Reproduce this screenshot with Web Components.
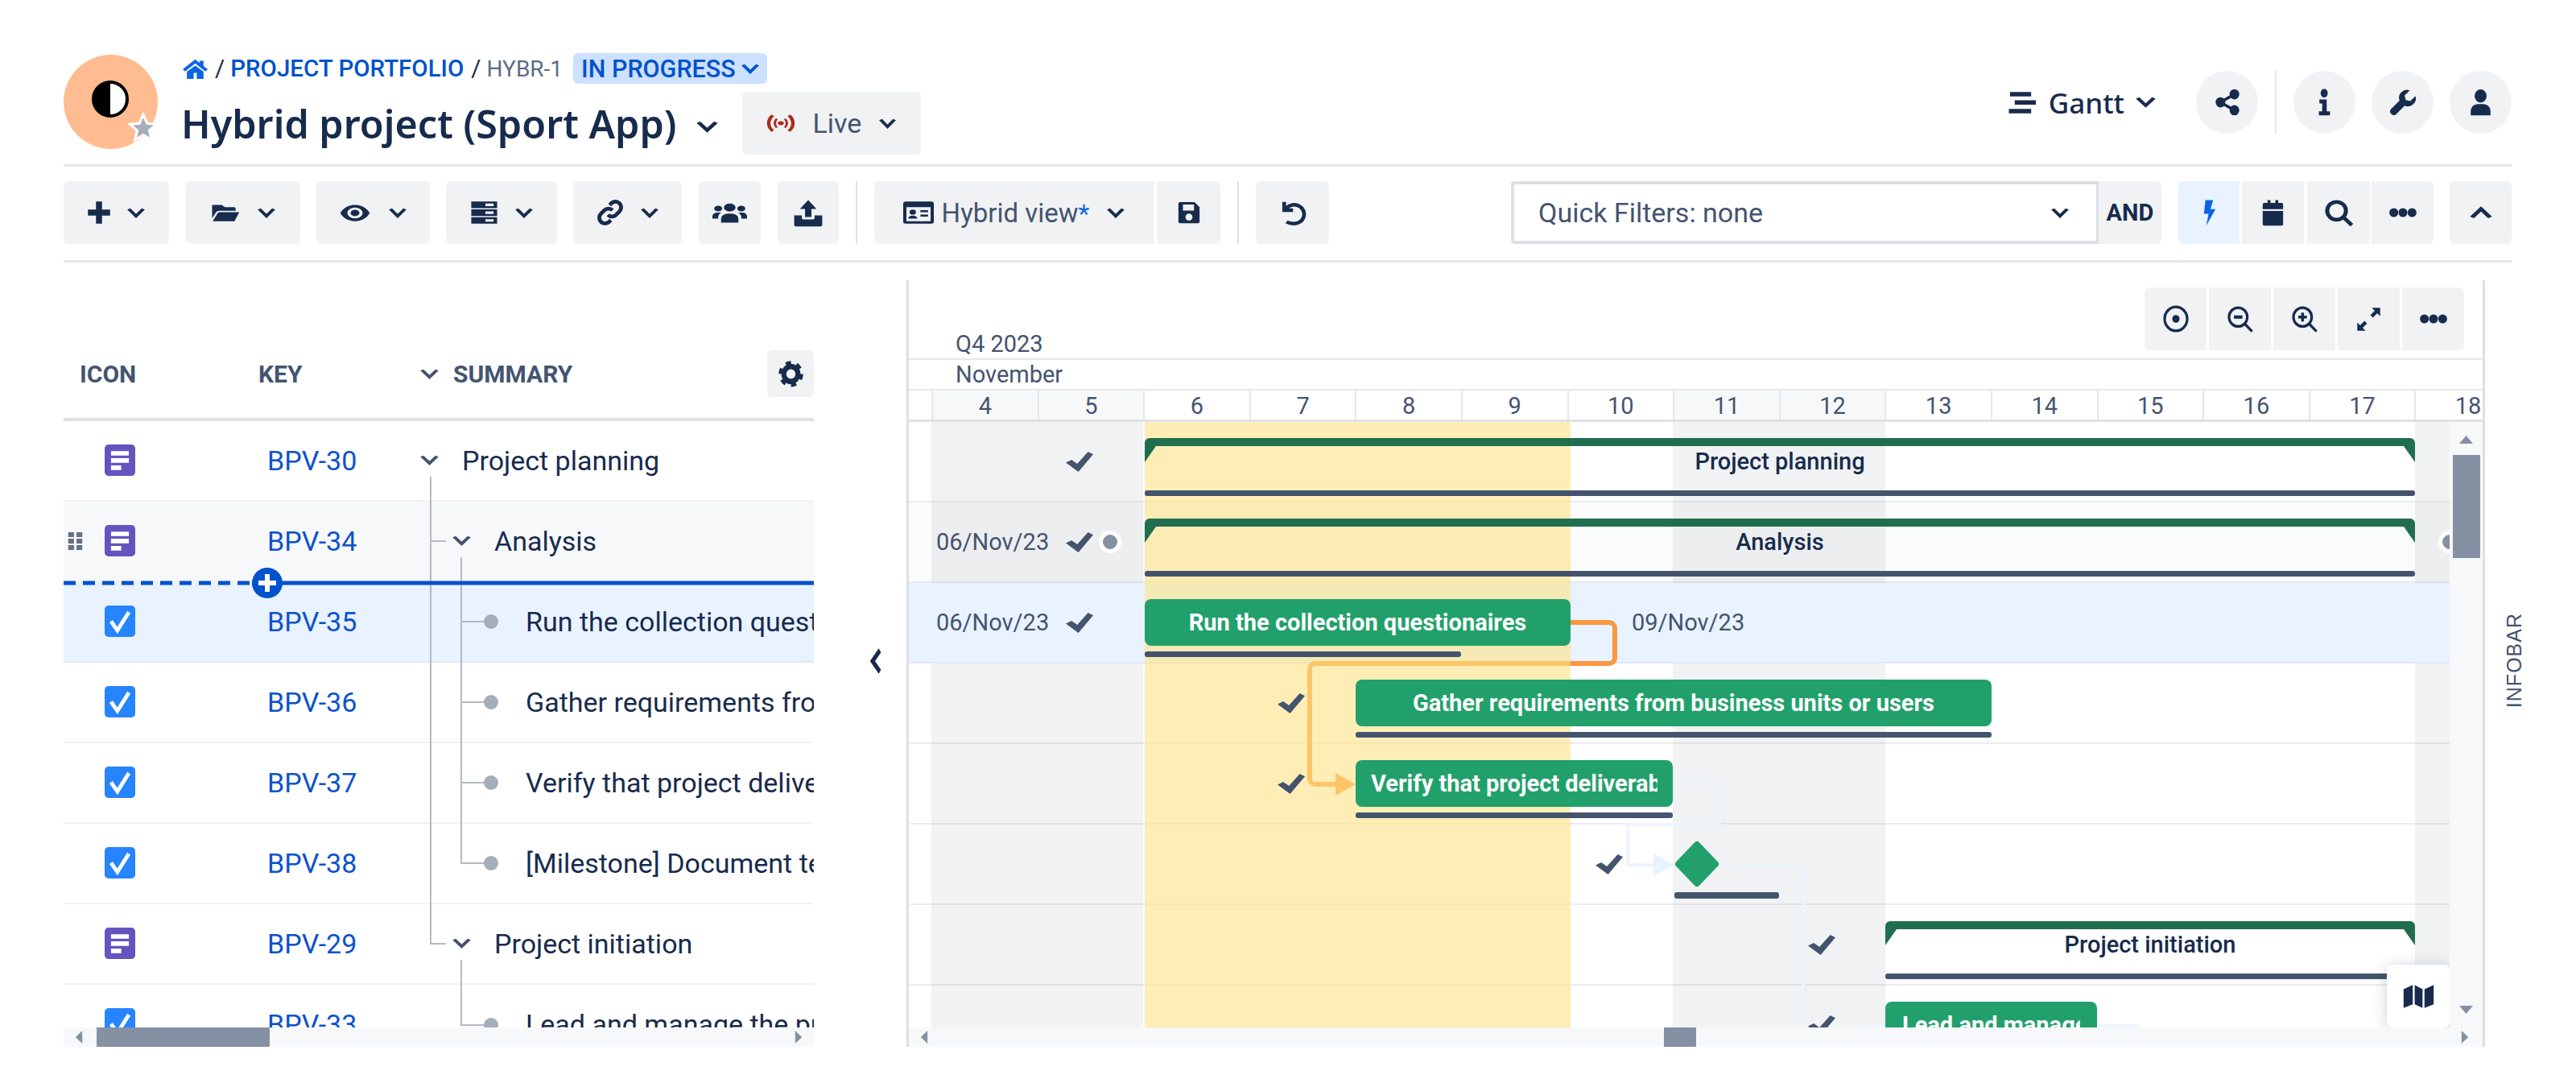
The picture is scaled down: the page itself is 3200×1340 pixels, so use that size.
<!DOCTYPE html>
<html lang="en">
<head>
<meta charset="utf-8">
<title>Hybrid project (Sport App)</title>
<style>
  html, body { margin: 0; padding: 0; background: #fff; }
  body { width: 3200px; height: 1340px; overflow: hidden; font-family: Roboto, "Liberation Sans", sans-serif; color: #172b4d; }
</style>
</head>
<body>
<project-page></project-page>

<script>
const ICONS = {
  chev: '<path d="M3 4l9 14L21 4" fill="none" stroke="currentColor" stroke-width="4.600"/>',
  chevup: '<path d="M3 20L12 6l9 14" fill="none" stroke="currentColor" stroke-width="4.600"/>',
  chevleft: '<path d="M18 2L7 12l11 10" fill="none" stroke="currentColor" stroke-width="5"/>',
  home: '<path d="M12 1.500L0 12.500l2.200 2.300L12 6l9.800 8.800 2.200-2.300-4-3.600V3h-3.800v2.500zM12 8.500L4 15.200v8h6.500V16.500h3v6.700H20v-8z"/>',
  plus: '<path d="M9 1h6v8h8v6h-8v8H9v-8H1V9h8z"/>',
  folder: '<path d="M1 3h8l2.500 2.500H19a1.500 1.500 0 011.500 1.500v2.500H7a3 3 0 00-2.700 1.700L1 18zM7 11h16.500L19.500 21H1.500l4.200-9a1.500 1.500 0 011.300-1z"/>',
  eye: '<path fill-rule="evenodd" d="M12 3C6.500 3 2.300 7 .5 12c1.800 5 6 9 11.500 9s9.700-4 11.500-9C21.700 7 17.500 3 12 3zM12 6a6 6 0 110 12 6 6 0 010-12zM12 8.500a3.500 3.500 0 100 7 3.500 3.500 0 000-7z"/>',
  server: '<path fill-rule="evenodd" d="M1 1h22v6.500H1zM13 3v2.500h7V3zM1 8.800h22v6.500H1zM13 10.800v2.500h7v-2.500zM1 16.500h22V23H1zM13 18.500V21h7v-2.500z"/>',
  link: '<g fill="none" stroke="currentColor" stroke-width="3.400"><path d="M10 14a5 5 0 007.100 0l3-3a5 5 0 00-7.100-7.100l-1.500 1.500"/><path d="M14 10a5 5 0 00-7.100 0l-3 3a5 5 0 007.100 7.100l1.500-1.500"/></g>',
  users: '<circle cx="12" cy="7" r="4"/><circle cx="4" cy="8" r="2.800"/><circle cx="20" cy="8" r="2.800"/><path d="M6 22v-4a5 5 0 015-5h2a5 5 0 015 5v4zM0 18v-2.500A3.500 3.500 0 013.500 12H6a7 7 0 00-2 6zM24 18v-2.500a3.500 3.500 0 00-3.500-3.500H18a7 7 0 012 6z"/>',
  upload: '<path d="M12 1l6.500 7.500H14.500v7h-5v-7H5.500zM1 14h6v2.500a1 1 0 001 1h8a1 1 0 001-1V14h6v8a1.500 1.500 0 01-1.500 1.500h-19A1.500 1.500 0 011 22z"/>',
  idcard: '<path fill-rule="evenodd" d="M2 1h20a2 2 0 012 2v18a2 2 0 01-2 2H2a2 2 0 01-2-2V3a2 2 0 012-2zM2.500 6.500V20.500h19V6.500zM4 18c0-2 1.500-3 3.500-3s3.500 1 3.500 3zM7.500 9a2.500 2.500 0 110 5 2.500 2.500 0 010-5zM13.500 9.500h6v2h-6zM13.500 14h6v2h-6z"/>',
  save: '<path fill-rule="evenodd" d="M3 1.500h14.500l5 5V21a1.500 1.500 0 01-1.500 1.500H3A1.500 1.500 0 011.500 21V3A1.500 1.500 0 013 1.500zM6 4v6h11V4zM12 13a3.500 3.500 0 100 7 3.500 3.500 0 000-7z"/>',
  undo: '<g fill="none" stroke="currentColor" stroke-width="3.200"><path d="M6 9A8.500 8.500 0 1112 21.500c-2 0-3.500-.5-5-1.500"/><path d="M5 2v7.500h7.500"/></g>',
  bolt: '<path d="M7 1h10l-3.500 8H20L8 23.500 11 13H5z"/>',
  calendar: '<path d="M6.500 1h3v3h-3zM14.500 1h3v3h-3zM3 3.500h18a1.500 1.500 0 011.500 1.500v4h-21V5A1.500 1.500 0 013 3.500zM1.500 10.500h21V22a1.500 1.500 0 01-1.500 1.500H3A1.500 1.500 0 011.500 22z"/>',
  search: '<g fill="none" stroke="currentColor" stroke-width="3.400"><circle cx="10" cy="10" r="8"/><path d="M15.500 15.500L23 23"/></g>',
  dots: '<ellipse cx="4" cy="12" rx="3.900" ry="11"/><ellipse cx="12" cy="12" rx="3.900" ry="11"/><ellipse cx="20" cy="12" rx="3.900" ry="11"/>',
  share: '<circle cx="18.500" cy="5" r="4.500"/><circle cx="18.500" cy="19" r="4.500"/><circle cx="5.500" cy="12" r="4.500"/><path d="M18.500 5L5.500 12l13 7" fill="none" stroke="currentColor" stroke-width="2.600"/>',
  info: '<ellipse cx="11.500" cy="4" rx="7" ry="3.800"/><path d="M2 9.500h14.500V20H23v3.500H1V20h6.500v-7H2z"/>',
  wrench: '<path d="M23 6.500l-4.500 4.500-4-1-1-4L18 1.500a7 7 0 00-9 9L1.500 18a3.200 3.200 0 004.500 4.500l7.500-7.500a7 7 0 009.500-8.500z"/>',
  user: '<circle cx="12" cy="6.500" r="5.800"/><path d="M2.500 23.500v-3.500A6.500 6.500 0 019 13.500h6a6.500 6.500 0 016.500 6.500v3.500z"/>',
  gear: '<circle cx="12" cy="12" r="6.800" fill="none" stroke="currentColor" stroke-width="4.800"/><circle cx="12" cy="12" r="10" fill="none" stroke="currentColor" stroke-width="3.600" stroke-dasharray="5 5.470"/>',
  target: '<circle cx="12" cy="12" r="10.500" fill="none" stroke="currentColor" stroke-width="2.400"/><circle cx="12" cy="12" r="3.400"/>',
  zoomout: '<g fill="none" stroke="currentColor" stroke-width="2.400"><circle cx="10" cy="10" r="8.500"/><path d="M16 16l7 7"/><path d="M6 10h8" stroke-width="3"/></g>',
  zoomin: '<g fill="none" stroke="currentColor" stroke-width="2.400"><circle cx="10" cy="10" r="8.500"/><path d="M16 16l7 7"/><path d="M6 10h8M10 6v8" stroke-width="2.600"/></g>',
  expand: '<path d="M15 1h8v8l-2.800-2.800-4.200 4.200-2.400-2.400 4.200-4.200zM9 23H1v-8l2.800 2.800 4.200-4.200 2.400 2.400-4.200 4.200z"/>',
  map: '<path d="M.5 5L7.500 1v18.500l-7 3.500zM9 1l6 4v18l-6-3.500zM16.500 5l7-4v18.500l-7 3.500z"/>',
  gantt: '<path d="M2 1h18v4.500H2zM6 9.500h18v4.500H6zM1 18.500h19V23H1z"/>',
  signal: '<g fill="none" stroke="currentColor" stroke-width="2.600"><path d="M6 3C2 8 2 16 6 21M18 3c4 5 4 13 0 18"/><path d="M9 7c-2 3-2 7 0 10M15 7c2 3 2 7 0 10" stroke-width="1.800"/></g><circle cx="12" cy="12" r="2.200"/>',
  grip: '<path d="M1 1h9v6H1zM14 1h9v6h-9zM1 9h9v6H1zM14 9h9v6h-9zM1 17h9v6H1zM14 17h9v6h-9z"/>',
  story: '<rect width="24" height="24" rx="3" fill="#6554c0"/><path d="M5 5h14v3.500H5zM5 10.500h14V14H5zM5 16h8v3.500H5z" fill="#fff"/>',
  task: '<rect width="24" height="24" rx="3" fill="#2684ff"/><path d="M5 12l5 7 9-14" fill="none" stroke="#fff" stroke-width="3"/>',
  check: '<path d="M0 13L5 9.500 10 14.500 19.500 0 24 3 11 24z"/>',
  tri: '<path d="M12 2l12 20H0z"/>',
  tridown: '<path d="M12 22L0 2h24z"/>',
  trileft: '<path d="M2 12L22 0v24z"/>',
  triright: '<path d="M22 12L2 0v24z"/>',
};

class UiIcon extends HTMLElement {
  connectedCallback() {
    const name = this.getAttribute('name');
    const w = this.getAttribute('w') || 24;
    const h = this.getAttribute('h') || w;
    const color = this.getAttribute('color') || 'inherit';
    this.attachShadow({ mode: 'open' });
    this.shadowRoot.innerHTML = `
      <style>
        :host { display: inline-flex; flex: none; width: ${w}px; height: ${h}px; color: ${color}; }
        svg { width: 100%; height: 100%; display: block; fill: currentColor; overflow: visible; }
      </style>
      <svg viewBox="0 0 24 24" preserveAspectRatio="none">${ICONS[name] || ''}</svg>`;
  }
}
customElements.define('ui-icon', UiIcon);

// grey toolbar button, width comes from the host style
class ToolBtn extends HTMLElement {
  constructor() {
    super();
    this.attachShadow({ mode: 'open' });
    this.shadowRoot.innerHTML = `
      <style>
        :host { display: inline-flex; flex: none; align-items: center; justify-content: center; gap: 20px;
                height: 78px; background: #f1f2f4; border-radius: 6px; color: #172b4d; font-size: 33px; box-sizing: border-box; }
        :host([round]) { border-radius: 50%; width: 77px; }
        :host([on]) { background: #e9f2ff; }
      </style>
      <slot></slot>`;
  }
}
customElements.define('tool-btn', ToolBtn);

class PageHeader extends HTMLElement {
  constructor() {
    super();
    this.attachShadow({ mode: 'open' });
    this.shadowRoot.innerHTML = `
      <style>
        :host { display: flex; height: 138px; border-bottom: 3px solid #e6e7ea; box-sizing: content-box; }
        .avatar { position: relative; width: 117px; height: 117px; margin-top: 2px; border-radius: 50%; background: #ffbc91; display: flex; align-items: center; justify-content: center; flex: none; }
        .moon { width: 38px; height: 38px; border: 4px solid #000; border-radius: 50%; background: linear-gradient(90deg, #000 50%, #fff 50%); margin: -7px 0 0 -1px; }
        .star { position: absolute; left: 80px; top: 70px; width: 38px; height: 40px; }
        .titles { margin-left: 31px; display: flex; flex-direction: column; }
        .crumbs { display: flex; align-items: center; height: 38px; font-size: 29.500px; font-weight: 500; color: #0052cc; white-space: nowrap; }
        .sep { color: #172b4d; font-weight: 400; margin: 0 7px 0 9px; }
        .issue { color: #5e6c84; font-weight: 400; font-size: 28px; }
        .pill { display: flex; align-items: center; height: 38px; margin-left: 13px; padding: 0 9px 0 10px; background: #cce0ff; border-radius: 6px; gap: 6px; color: #0052cc; font-size: 30.500px; }
        .name { display: flex; align-items: center; height: 78px; margin-top: 10px; }
        h1 { margin: 0 0 0 -2px; font: 600 48.500px "Noto Sans", Roboto, sans-serif; color: #172b4d; white-space: nowrap; }
        h1 + ui-icon { margin: 8px 29px 0 23px; }
        .live { gap: 0; width: 222px; justify-content: flex-start; padding-left: 28px; color: #44546f; font-size: 34px; }
        .right { margin-left: auto; display: flex; align-items: center; margin-top: 22px; height: 78px; }
        .gantt { display: flex; align-items: center; font: 500 35px "Noto Sans", Roboto, sans-serif; color: #172b4d; margin-right: 49px; }
        .rule { width: 2px; height: 78px; background: #e6e7ea; margin: 0 21px; }
      </style>
      <div class="avatar">
        <div class="moon"></div>
        <svg class="star" viewBox="0 0 24 24"><path d="M12 2l3 7 7.500.6-5.700 5 1.700 7.400L12 18l-6.500 4 1.700-7.400-5.700-5L9 9z" fill="#a5adba" stroke="#fff" stroke-width="2"/></svg>
      </div>
      <div class="titles">
        <div class="crumbs">
          <ui-icon name="home" w="31" h="27" color="#0c66e4"></ui-icon>
          <span class="sep">/</span><span>PROJECT PORTFOLIO</span>
          <span class="sep">/</span><span class="issue">HYBR-1</span>
          <span class="pill">IN PROGRESS <ui-icon name="chev" w="24" h="15" color="#0052cc"></ui-icon></span>
        </div>
        <div class="name">
          <h1>Hybrid project (Sport App)</h1>
          <ui-icon name="chev" w="29" h="17" color="#172b4d"></ui-icon>
          <tool-btn class="live">
            <ui-icon name="signal" w="40" h="26" color="#ae2a19"></ui-icon>
            <span style="margin:0 21px 0 20px">Live</span>
            <ui-icon name="chev" w="23" h="15" color="#172b4d"></ui-icon>
          </tool-btn>
        </div>
      </div>
      <div class="right">
        <div class="gantt">
          <ui-icon name="gantt" w="35" h="29" color="#172b4d"></ui-icon>
          <span style="margin:0 13px 0 16px">Gantt</span>
          <ui-icon name="chev" w="27" h="16" color="#172b4d"></ui-icon>
        </div>
        <tool-btn round><ui-icon name="share" w="32" h="34"></ui-icon></tool-btn>
        <div class="rule"></div>
        <tool-btn round><ui-icon name="info" w="15" h="34"></ui-icon></tool-btn>
        <tool-btn round style="margin-left:20px"><ui-icon name="wrench" w="34" h="34"></ui-icon></tool-btn>
        <tool-btn round style="margin-left:20px"><ui-icon name="user" w="31" h="34"></ui-icon></tool-btn>
      </div>`;
  }
}
customElements.define('page-header', PageHeader);

class ActionBar extends HTMLElement {
  constructor() {
    super();
    this.attachShadow({ mode: 'open' });
    const chev = '<ui-icon name="chev" w="24" h="15" color="#172b4d"></ui-icon>';
    this.shadowRoot.innerHTML = `
      <style>
        :host { display: flex; align-items: center; padding: 18px 0 20px; border-bottom: 3px solid #e6e7ea; }
        .rule { width: 2px; height: 78px; background: #dfe1e6; margin: 0 21px 0 21px; flex: none; }
        .quick { display: flex; align-items: center; width: 730px; height: 78px; box-sizing: border-box; margin-left: auto;
                 border: 4px solid #dcdfe4; border-right-width: 3px; border-radius: 4px 0 0 4px; padding: 0 33px 0 30px; justify-content: space-between; color: #44546f; font-size: 34px; }
        .and { width: 78px; font-weight: 700; font-size: 29px; border-radius: 0 6px 6px 0; }
        .view { color: #44546f; }
        .star { color: #0c66e4; font-size: 32px; }
      </style>
      <tool-btn style="width:131px;gap:19px"><ui-icon name="plus" w="30" h="30"></ui-icon>${chev}</tool-btn>
      <tool-btn style="width:142px;margin-left:21px;gap:21px"><ui-icon name="folder" w="36" h="27"></ui-icon>${chev}</tool-btn>
      <tool-btn style="width:141px;margin-left:20px;gap:22px"><ui-icon name="eye" w="38" h="27"></ui-icon>${chev}</tool-btn>
      <tool-btn style="width:138px;margin-left:20px;gap:20px"><ui-icon name="server" w="35" h="30"></ui-icon>${chev}</tool-btn>
      <tool-btn style="width:135px;margin-left:20px;gap:20px"><ui-icon name="link" w="34" h="34"></ui-icon>${chev}</tool-btn>
      <tool-btn style="width:77px;margin-left:21px"><ui-icon name="users" w="43" h="30"></ui-icon></tool-btn>
      <tool-btn style="width:76px;margin-left:21px"><ui-icon name="upload" w="38" h="35"></ui-icon></tool-btn>
      <div class="rule"></div>
      <tool-btn class="view" style="width:348px;border-radius:6px 0 0 6px;gap:0">
        <ui-icon name="idcard" w="38" h="30" color="#172b4d"></ui-icon>
        <span style="margin:0 21px 0 10px;white-space:nowrap">Hybrid view<span class="star">*</span></span>${chev}
      </tool-btn>
      <tool-btn style="width:79px;margin-left:3px;border-radius:0 6px 6px 0"><ui-icon name="save" w="30" h="30"></ui-icon></tool-btn>
      <div class="rule"></div>
      <tool-btn style="width:91px"><ui-icon name="undo" w="35" h="33"></ui-icon></tool-btn>
      <div class="quick"><span>Quick Filters: none</span>${chev}</div>
      <tool-btn class="and">AND</tool-btn>
      <tool-btn on style="width:76px;margin-left:21px;border-radius:6px 0 0 6px"><ui-icon name="bolt" w="23" h="34" color="#0c66e4"></ui-icon></tool-btn>
      <tool-btn style="width:77px;margin-left:3px;border-radius:0"><ui-icon name="calendar" w="29" h="34"></ui-icon></tool-btn>
      <tool-btn style="width:78px;margin-left:4px;border-radius:0"><ui-icon name="search" w="35" h="33"></ui-icon></tool-btn>
      <tool-btn style="width:77px;margin-left:2px;border-radius:0 6px 6px 0"><ui-icon name="dots" w="34" h="12"></ui-icon></tool-btn>
      <tool-btn style="width:77px;margin-left:20px"><ui-icon name="chevup" w="30" h="18"></ui-icon></tool-btn>`;
  }
}
customElements.define('action-bar', ActionBar);

// horizontal and vertical scroll tracks
class ScrollTrack extends HTMLElement {
  connectedCallback() {
    const before = this.getAttribute('before');
    const size = this.getAttribute('size');
    const vertical = this.hasAttribute('vertical');
    this.attachShadow({ mode: 'open' });
    this.shadowRoot.innerHTML = vertical ? `
      <style>
        :host { display: flex; flex-direction: column; align-items: center; width: 41px; flex: none; background: #f7f8f9; padding: 16px 0; box-sizing: border-box; }
        .thumb { width: 34px; background: #8590a2; height: ${size}px; margin-top: ${before}px; }
        .fill { flex: 1; }
      </style>
      <ui-icon name="tri" w="17" h="12" color="#8590a2"></ui-icon>
      <div class="thumb"></div><div class="fill"></div>
      <ui-icon name="tridown" w="17" h="12" color="#8590a2"></ui-icon>` : `
      <style>
        :host { display: flex; align-items: center; height: 24px; flex: none; background: #f7f8f9; padding: 0 14px; box-sizing: border-box; }
        .thumb { height: 24px; background: #8590a2; width: ${size}px; margin-left: ${before}px; }
        .fill { flex: 1; }
      </style>
      <ui-icon name="trileft" w="10" h="16" color="#8590a2"></ui-icon>
      <div class="thumb"></div><div class="fill"></div>
      <ui-icon name="triright" w="10" h="16" color="#8590a2"></ui-icon>`;
  }
}
customElements.define('scroll-track', ScrollTrack);

class IssueRow extends HTMLElement {
  connectedCallback() {
    const type = this.getAttribute('type');
    const key = this.getAttribute('key');
    const level = +this.getAttribute('level');
    const parent = this.hasAttribute('parent');
    const grip = this.hasAttribute('grip');
    const indent = parent ? level * 40 : 132;
    this.attachShadow({ mode: 'open' });
    this.shadowRoot.innerHTML = `
      <style>
        :host { display: flex; align-items: center; height: 100px; flex: none; box-sizing: border-box; border-bottom: 2px solid #f1f2f4; padding-bottom: 1px; font-size: 34px; }
        :host([tint]) { background: #f7f8fa; }
        :host([selected]) { background: #e9f2ff; border-bottom-color: #dfe8f5; }
        .grip { width: 51px; flex: none; padding-left: 5px; box-sizing: border-box; display: flex; }
        .key { width: 189px; margin-left: 164px; flex: none; color: #0c52cc; }
        .sum { flex: 1; min-width: 0; overflow: hidden; display: flex; align-items: center; white-space: nowrap; color: #172b4d; padding-left: ${indent}px; }
        .sum ui-icon { margin-right: 28px; }
      </style>
      <div class="grip">${grip ? '<ui-icon name="grip" w="19" h="24" color="#626f86"></ui-icon>' : ''}</div>
      <ui-icon name="${type}" w="38" h="39"></ui-icon>
      <span class="key">${key}</span>
      <div class="sum">${parent ? '<ui-icon name="chev" w="25" h="15" color="#44546f"></ui-icon>' : ''}<slot></slot></div>`;
  }
}
customElements.define('issue-row', IssueRow);

class IssueTable extends HTMLElement {
  constructor() {
    super();
    this.attachShadow({ mode: 'open' });
    this.shadowRoot.innerHTML = `
      <style>
        :host { display: flex; flex-direction: column; width: 932px; flex: none; }
        .head { display: flex; align-items: center; height: 58px; padding: 87px 0 26px; border-bottom: 4px solid #dfe1e6; color: #44546f; font-size: 30px; font-weight: 700; flex: none; }
        .head span:nth-child(1) { margin-left: 20px; width: 222px; }
        .head span:nth-child(2) { width: 200px; }
        .head > ui-icon { margin-right: 17px; }
        .gear { margin-left: auto; width: 58px; height: 58px; }
        .body { position: relative; height: 753px; overflow: hidden; display: flex; flex-direction: column; flex: none; }
        svg.lines { position: absolute; left: 0; top: 0; width: 932px; height: 753px; }
      </style>
      <div class="head">
        <span>ICON</span><span>KEY</span>
        <ui-icon name="chev" w="25" h="15" color="#44546f"></ui-icon><span>SUMMARY</span>
        <tool-btn class="gear"><ui-icon name="gear" w="31" h="33"></ui-icon></tool-btn>
      </div>
      <div class="body">
        <slot></slot>
        <svg class="lines" viewBox="0 0 932 753" fill="none">
          <g stroke="#b3b9c4" stroke-width="2">
            <path d="M456 69V649H475M456 149H475"/>
            <path d="M494 169V549H522M494 249H522M494 349H522M494 449H522M494 669V750H522"/>
          </g>
          <g fill="#a5adba">
            <circle cx="531" cy="249" r="9"/><circle cx="531" cy="349" r="9"/><circle cx="531" cy="449" r="9"/><circle cx="531" cy="549" r="9"/><circle cx="531" cy="750" r="9"/>
          </g>
          <path d="M0 201H234" stroke="#0052cc" stroke-width="5" stroke-dasharray="15 9"/>
          <path d="M234 201H932" stroke="#0052cc" stroke-width="5"/>
          <circle cx="253" cy="201" r="19" fill="#0052cc"/>
          <path d="M253 190v22M242 201h22" stroke="#fff" stroke-width="6"/>
        </svg>
      </div>
      <scroll-track before="17" size="215"></scroll-track>`;
  }
}
customElements.define('issue-table', IssueTable);

// green task bar with its progress line under it
class GanttTask extends HTMLElement {
  connectedCallback() {
    const x = this.getAttribute('x');
    const w = this.getAttribute('w');
    const p = this.getAttribute('p') || w;
    const pad = this.getAttribute('pad') || 19;
    this.attachShadow({ mode: 'open' });
    this.shadowRoot.innerHTML = `
      <style>
        :host { position: absolute; left: ${x}px; top: 20px; width: ${w}px; z-index: 2; display: block; }
        .bar { height: 58px; background: #22a06b; border-radius: 8px; color: #fff; font-size: 29px; font-weight: 700; line-height: 58px; padding: 0 ${pad}px; box-sizing: border-box; }
        .txt { overflow: hidden; white-space: nowrap; text-align: center; }
        .long { text-align: left; }
        .line { height: 7px; width: ${p}px; background: #44546f; border-radius: 3px; margin-top: 7px; }
      </style>
      <div class="bar"><div class="txt ${this.hasAttribute('long') ? 'long' : ''}"><slot></slot></div></div>
      <div class="line"></div>`;
  }
}
customElements.define('gantt-task', GanttTask);

// parent bar: dark top strip with hooks at both ends
class GanttSummary extends HTMLElement {
  connectedCallback() {
    const x = this.getAttribute('x');
    const w = this.getAttribute('w');
    this.attachShadow({ mode: 'open' });
    this.shadowRoot.innerHTML = `
      <style>
        :host { position: absolute; left: ${x}px; top: 20px; width: ${w}px; height: 72px; z-index: 2; display: block; }
        svg { position: absolute; left: 0; top: 0; width: 100%; height: 30px; }
        .label { position: absolute; left: 0; right: 0; top: 10px; text-align: center; font-size: 29px; font-weight: 500; line-height: 38px; color: #172b4d; }
        .line { position: absolute; left: 0; right: 0; top: 65px; height: 7px; background: #44546f; border-radius: 3px; }
      </style>
      <svg viewBox="0 0 ${w} 30" preserveAspectRatio="none"><path d="M0 6a6 6 0 016-6H${w - 6}a6 6 0 016 6V30L${w - 14} 10H14L0 30z" fill="#216e4e"/></svg>
      <div class="label"><slot></slot></div>
      <div class="line"></div>`;
  }
}
customElements.define('gantt-summary', GanttSummary);

// small things pinned beside a bar: dates, checks
class GanttPin extends HTMLElement {
  connectedCallback() {
    this.attachShadow({ mode: 'open' });
    this.shadowRoot.innerHTML = `
      <style>
        :host { position: absolute; left: ${this.getAttribute('x')}px; top: 0; height: 98px; display: flex; align-items: center; z-index: 2; color: #44546f; font-size: 29px; white-space: nowrap; }
      </style>
      <slot></slot>`;
  }
}
customElements.define('gantt-pin', GanttPin);

class GanttRow extends HTMLElement {
  constructor() {
    super();
    this.attachShadow({ mode: 'open' });
    this.shadowRoot.innerHTML = `
      <style>
        :host { display: block; position: relative; height: 100px; flex: none; box-sizing: border-box; border-bottom: 2px solid rgba(9,30,66,.08); }
        :host([tint]) { background: rgba(9,30,66,.02); }
        :host([selected]) { background: #e9f2ff; border-bottom-color: #dfe8f5; }
      </style>
      <slot></slot>`;
  }
}
customElements.define('gantt-row', GanttRow);

class GanttChart extends HTMLElement {
  constructor() {
    super();
    this.attachShadow({ mode: 'open' });
    const days = [];
    for (let d = 4; d <= 18; d++) {
      const off = d === 4 || d === 5 || d === 11 || d === 12;
      days.push(`<div class="day${off ? ' off' : ''}">${d}</div>`);
    }
    this.shadowRoot.innerHTML = `
      <style>
        :host { display: flex; flex-direction: column; width: 1961px; flex: none; box-sizing: border-box; border-left: 3px solid #dcdfe4; border-right: 3px solid #dcdfe4; color: #44546f; }
        .quarter { display: flex; justify-content: space-between; align-items: flex-end; height: 97px; border-bottom: 2px solid #e6e7ea; padding: 0 23px 0 58px; font-size: 29px; flex: none; }
        .quarter span { line-height: 36px; }
        .zoom { display: flex; gap: 3px; align-self: flex-start; margin-top: 9px; }
        .zoom tool-btn { width: 77px; border-radius: 0; }
        .zoom tool-btn:first-child { border-radius: 6px 0 0 6px; }
        .zoom tool-btn:last-child { border-radius: 0 6px 6px 0; }
        .month { height: 36px; line-height: 36px; padding-left: 58px; border-bottom: 2px solid #e6e7ea; font-size: 29px; flex: none; }
        .days { display: flex; height: 36px; padding-left: 28px; border-bottom: 3px solid #dfe1e6; overflow: hidden; flex: none; }
        .day { width: 131.6px; flex: none; box-sizing: border-box; border-left: 2px solid #e6e7ea; text-align: center; line-height: 38px; font-size: 29px; }
        .day.off { background: #f7f8f9; }
        .body { display: flex; height: 752px; flex: none; overflow: hidden; }
        .view { position: relative; flex: 1; min-width: 0; overflow: hidden; display: flex; flex-direction: column; }
        .off-band { position: absolute; top: 0; bottom: 0; background: #f1f2f4; }
        .today { position: absolute; top: 0; bottom: 0; left: 293px; width: 529px; background: rgba(253,227,132,.6); z-index: 1; }
        .rows { display: flex; flex-direction: column; position: relative; }
        svg.links { position: absolute; left: 0; top: 0; width: 1914px; height: 752px; fill: none; }
        .map { position: absolute; right: 0; bottom: 0; width: 78px; height: 78px; background: #fff; border-radius: 6px; box-shadow: 0 2px 18px rgba(9,30,66,.22); display: flex; align-items: center; justify-content: center; z-index: 3; color: #172b4d; }
      </style>
      <div class="quarter">
        <span>Q4 2023</span>
        <div class="zoom">
          <tool-btn><ui-icon name="target" w="32" h="34"></ui-icon></tool-btn>
          <tool-btn><ui-icon name="zoomout" w="32" h="33"></ui-icon></tool-btn>
          <tool-btn><ui-icon name="zoomin" w="32" h="33"></ui-icon></tool-btn>
          <tool-btn><ui-icon name="expand" w="31" h="31"></ui-icon></tool-btn>
          <tool-btn><ui-icon name="dots" w="34" h="12"></ui-icon></tool-btn>
        </div>
      </div>
      <div class="month">November</div>
      <div class="days">${days.join('')}</div>
      <div class="body">
        <div class="view">
          <div class="off-band" style="left:28px;width:263px"></div>
          <div class="off-band" style="left:949px;width:264px"></div>
          <div class="off-band" style="left:1871px;right:0"></div>
          <div class="rows"><slot></slot></div>
          <svg class="links" viewBox="0 0 1914 752">
            <path d="M822 249H870a7 7 0 017 7V293a7 7 0 01-7 7H505a7 7 0 00-7 7V443a7 7 0 007 7H532" stroke="#f9983e" stroke-width="6"/>
            <path d="M530 436L555 450L530 464z" fill="#f9983e"/>
            <g stroke="#eef4fe" stroke-width="4">
              <path d="M949 449H1007V500H893V550H925"/>
              <path d="M1007 550H1111V752M1180 750H1529"/>
            </g>
            <path d="M925 536L951 550L925 564z" fill="#e9f2ff"/>
          </svg>
          <div class="today"></div>
          <div class="map"><ui-icon name="map" w="39" h="31"></ui-icon></div>
        </div>
        <scroll-track vertical before="13" size="128"></scroll-track>
      </div>
      <scroll-track before="914" size="40" style="padding-right:17px"></scroll-track>`;
  }
}
customElements.define('gantt-chart', GanttChart);

class InfoBar extends HTMLElement {
  constructor() {
    super();
    this.attachShadow({ mode: 'open' });
    this.shadowRoot.innerHTML = `
      <style>
        :host { display: flex; align-items: center; justify-content: center; width: 73px; flex: none; padding-bottom: 8px; box-sizing: border-box; }
        span { writing-mode: vertical-rl; transform: rotate(180deg); font: 400 25px "Liberation Sans", sans-serif; letter-spacing: 1px; color: #44546f; }
      </style>
      <span>INFOBAR</span>`;
  }
}
customElements.define('info-bar', InfoBar);

class ProjectPage extends HTMLElement {
  constructor() {
    super();
    this.attachShadow({ mode: 'open' });
    const check = '<ui-icon name="check" w="34" h="25" color="#44546f"></ui-icon>';
    this.shadowRoot.innerHTML = `
      <style>
        :host { display: block; padding: 66px 80px 0 79px; width: 3200px; box-sizing: border-box; }
        .main { display: flex; height: 952px; margin: 22px -40px 0 0; }
        .gap { width: 115px; flex: none; display: flex; align-items: center; padding-left: 67px; padding-bottom: 6px; box-sizing: border-box; color: #172b4d; }
        .dot { width: 18px; height: 18px; border-radius: 50%; background: #8590a2; border: 5px solid #fff; }
      </style>
      <page-header></page-header>
      <action-bar></action-bar>
      <div class="main">
        <issue-table>
          <issue-row type="story" key="BPV-30" level="0" parent>Project planning</issue-row>
          <issue-row type="story" key="BPV-34" level="1" parent grip tint>Analysis</issue-row>
          <issue-row type="task" key="BPV-35" level="2" selected>Run the collection questionaires</issue-row>
          <issue-row type="task" key="BPV-36" level="2">Gather requirements from business units or users</issue-row>
          <issue-row type="task" key="BPV-37" level="2">Verify that project deliverables meet requirements</issue-row>
          <issue-row type="task" key="BPV-38" level="2">[Milestone] Document team requirements</issue-row>
          <issue-row type="story" key="BPV-29" level="1" parent>Project initiation</issue-row>
          <issue-row type="task" key="BPV-33" level="2">Lead and manage the project work</issue-row>
        </issue-table>
        <div class="gap"><ui-icon name="chevleft" w="20" h="32"></ui-icon></div>
        <gantt-chart>
          <gantt-row>
            <gantt-pin x="195">${check}</gantt-pin>
            <gantt-summary x="293" w="1578">Project planning</gantt-summary>
          </gantt-row>
          <gantt-row tint>
            <gantt-pin x="34">06/Nov/23</gantt-pin>
            <gantt-pin x="195">${check}</gantt-pin>
            <gantt-pin x="236"><div class="dot"></div></gantt-pin>
            <gantt-summary x="293" w="1578">Analysis</gantt-summary>
            <gantt-pin x="1900"><div class="dot"></div></gantt-pin>
          </gantt-row>
          <gantt-row selected>
            <gantt-pin x="34">06/Nov/23</gantt-pin>
            <gantt-pin x="195">${check}</gantt-pin>
            <gantt-task x="293" w="529" p="393">Run the collection questionaires</gantt-task>
            <gantt-pin x="898">09/Nov/23</gantt-pin>
          </gantt-row>
          <gantt-row>
            <gantt-pin x="458">${check}</gantt-pin>
            <gantt-task x="555" w="790">Gather requirements from business units or users</gantt-task>
          </gantt-row>
          <gantt-row>
            <gantt-pin x="458">${check}</gantt-pin>
            <gantt-task x="555" w="394" long>Verify that project deliverables meet requirements</gantt-task>
          </gantt-row>
          <gantt-row>
            <gantt-pin x="853">${check}</gantt-pin>
            <gantt-pin x="951"><svg width="56" height="58" viewBox="0 0 56 58"><path d="M28 5L51 29 28 53 5 29z" fill="#22a06b" stroke="#22a06b" stroke-width="8" stroke-linejoin="round"/></svg></gantt-pin>
            <div style="position:absolute;left:951px;top:84px;width:130px;height:8px;background:#44546f;border-radius:3px;z-index:2"></div>
          </gantt-row>
          <gantt-row>
            <gantt-pin x="1117">${check}</gantt-pin>
            <gantt-summary x="1213" w="658">Project initiation</gantt-summary>
          </gantt-row>
          <gantt-row>
            <gantt-pin x="1117">${check}</gantt-pin>
            <gantt-task x="1213" w="263" long pad="21">Lead and manage the project work</gantt-task>
          </gantt-row>
        </gantt-chart>
        <info-bar></info-bar>
      </div>`;
  }
}
customElements.define('project-page', ProjectPage);
</script>
</body>
</html>
